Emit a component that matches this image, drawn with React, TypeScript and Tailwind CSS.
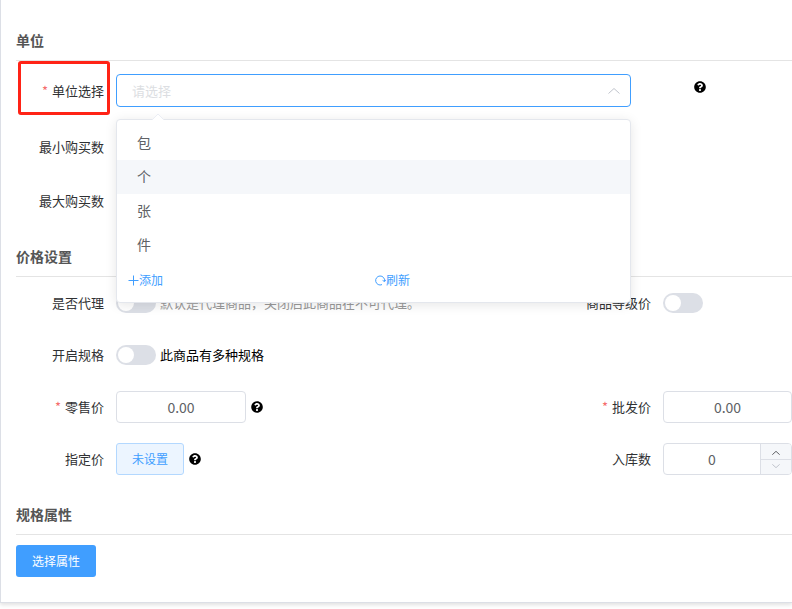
import React, { useState } from 'react';
import { FaQuestionCircle } from 'react-icons/fa';

interface FieldProps {
  id: string;
  label: string;
  required?: boolean;
  highlight?: boolean;
  children?: React.ReactNode;
}

const UNITS = ['包', '个', '张', '件'];

function Field({ id, label, required, highlight, children }: FieldProps) {
  return (
    <div className="flex min-h-8 min-w-0 items-center">
      <label
        htmlFor={id}
        className="relative w-[100px] shrink-0 pr-3 text-right text-[13px] leading-8 text-[#303133]"
      >
        {required && <span className="mr-1 text-[#f56c6c]">*</span>}
        {label}
        {highlight && (
          <span className="pointer-events-none absolute -top-3.5 right-1.5 -bottom-2 left-0.5 rounded-[3px] border-3 border-[#ff2316]" />
        )}
      </label>
      {children}
    </div>
  );
}

function SectionTitle({ children }: { children: React.ReactNode }) {
  return (
    <h2 className="border-b border-[#e4e4e4] pb-[9px] text-sm leading-[22px] font-bold text-[#555555]">
      {children}
    </h2>
  );
}

function Help() {
  return (
    <button type="button" aria-label="帮助" className="size-3 shrink-0 text-black">
      <FaQuestionCircle className="size-3" />
    </button>
  );
}

function Switch({ id }: { id: string }) {
  return (
    <input
      id={id}
      type="checkbox"
      role="switch"
      className="flex h-5 w-10 shrink-0 appearance-none items-center rounded-full bg-[#dcdfe6] px-0.5 before:size-4 before:rounded-full before:bg-white checked:justify-end checked:bg-[#409eff]"
    />
  );
}

function Chevron({ className, down }: { className?: string; down?: boolean }) {
  return (
    <svg viewBox="0 0 12 6" fill="none" stroke="currentColor" className={className} aria-hidden="true">
      <path d={down ? 'M.5.5 6 5.5 11.5.5' : 'M.5 5.5 6 .5 11.5 5.5'} vectorEffect="non-scaling-stroke" />
    </svg>
  );
}

function UnitSelect() {
  const [open, setOpen] = useState(true);
  const [value, setValue] = useState('');

  return (
    <div className="relative min-w-0 flex-1">
      <select
        id="unit"
        value={value}
        onMouseDown={(e) => {
          e.preventDefault();
          setOpen(!open);
        }}
        onChange={(e) => setValue(e.target.value)}
        className={`block h-[33px] w-full appearance-none rounded border border-[#409eff] bg-white px-[15px] text-[13px] outline-none ${
          value ? 'text-[#606266]' : 'text-[#dcdee2]'
        }`}
      >
        <option value="">请选择</option>
        {UNITS.map((unit) => (
          <option key={unit}>{unit}</option>
        ))}
      </select>
      <Chevron
        down={!open}
        className="pointer-events-none absolute top-[14px] right-[11px] h-1.5 w-3 text-[#c0c4cc]"
      />

      {open && (
        <div className="absolute top-full right-0 left-0 z-10 mt-3 rounded border border-[#e4e7ed] bg-white pt-1.5 shadow-[0_2px_12px_rgba(0,0,0,0.1)]">
          {/* Arrow */}
          <svg viewBox="0 0 12 6" className="absolute -top-1.5 left-[35px] h-1.5 w-3" aria-hidden="true">
            <path d="M0 6 6 0l6 6z" fill="#ffffff" />
            <path d="M0 6 6 0l6 6" fill="none" stroke="#ebeef5" />
          </svg>
          <ul>
            {UNITS.map((unit) => (
              <li key={unit}>
                <button
                  type="button"
                  onClick={() => {
                    setValue(unit);
                    setOpen(false);
                  }}
                  className={`block h-[34px] w-full px-5 pb-0.5 text-left text-sm leading-8 text-[#606266] ${
                    unit === '个' ? 'bg-[#f5f7fa]' : 'hover:bg-[#f5f7fa]'
                  }`}
                >
                  {unit}
                </button>
              </li>
            ))}
          </ul>
          <div className="grid h-10 grid-cols-[247fr_266fr] pb-1 text-xs text-[#409eff]">
            <button type="button" className="flex items-center pl-[11px]">
              <svg viewBox="0 0 11 11" stroke="currentColor" className="size-[11px]" aria-hidden="true">
                <path d="M5.5.5v10M.5 5.5h10" />
              </svg>
              添加
            </button>
            <button type="button" className="flex items-center pl-[11px]">
              <svg viewBox="0 0 11 11" fill="none" stroke="currentColor" className="size-[11px]" aria-hidden="true">
                <path d="M7 9.6A4.5 4.5 0 1 1 9.6 6.2M7.6 5.4l2 1.2 1.2-1.8" />
              </svg>
              刷新
            </button>
          </div>
        </div>
      )}
    </div>
  );
}

const inputClass =
  'h-8 min-w-0 rounded border border-[#dcdfe6] bg-white text-center text-sm text-[#606266] outline-none';

const gridClass = 'grid grid-cols-[minmax(0,1fr)_229px] gap-y-5 pt-2.5';

export default function App() {
  const [stock, setStock] = useState(0);

  return (
    <div className="overflow-hidden pb-1.5 font-['Noto_Sans_CJK_SC',sans-serif]">
      <form className="border-b border-l border-[#dcdfe6] bg-white pt-[29px] pb-[25px] pl-[15px] shadow-[0_2px_4px_rgba(0,0,0,0.12)]">
        <SectionTitle>单位</SectionTitle>
        <div className="flex flex-col gap-[22px] pt-[11px] pb-[28px]">
          <div className="flex h-[37px] items-center">
            <div className="min-w-0 flex-1">
              <Field id="unit" label="单位选择" required highlight>
                <UnitSelect />
              </Field>
            </div>
            <div className="flex w-[161px] shrink-0 pb-[7px] pl-[63px]">
              <Help />
            </div>
          </div>
          <Field id="min" label="最小购买数">
            <input id="min" type="text" className={`${inputClass} w-[130px]`} />
          </Field>
          <Field id="max" label="最大购买数">
            <input id="max" type="text" className={`${inputClass} w-[130px]`} />
          </Field>
        </div>

        <SectionTitle>价格设置</SectionTitle>
        <div className={`${gridClass} pb-[28px]`}>
          <Field id="agent" label="是否代理">
            <Switch id="agent" />
            <span className="pl-1 text-[13px] whitespace-nowrap text-[#999999]">
              默认是代理商品，关闭后此商品在不可代理。
            </span>
          </Field>
          <Field id="level" label="商品等级价">
            <Switch id="level" />
          </Field>

          <div className="col-span-2">
            <Field id="spec" label="开启规格">
              <Switch id="spec" />
              <span className="pl-1 text-[13px] text-black">此商品有多种规格</span>
            </Field>
          </div>

          <Field id="retail" label="零售价" required>
            <input id="retail" type="text" defaultValue="0.00" className={`${inputClass} mr-[5px] w-[130px]`} />
            <Help />
          </Field>
          <Field id="wholesale" label="批发价" required>
            <input id="wholesale" type="text" defaultValue="0.00" className={`${inputClass} w-full`} />
          </Field>

          <Field id="fixed" label="指定价">
            <button
              id="fixed"
              type="button"
              className="mr-[5px] h-8 w-[68px] rounded-[3px] border border-[#b3d8ff] bg-[#ecf5ff] text-xs text-[#409eff]"
            >
              未设置
            </button>
            <Help />
          </Field>
          <Field id="stock" label="入库数">
            <div className="flex h-8 min-w-0 flex-1 overflow-hidden rounded border border-[#dcdfe6]">
              <input
                id="stock"
                type="text"
                value={stock}
                onChange={(e) => setStock(Number(e.target.value) || 0)}
                className="min-w-0 flex-1 text-center text-sm text-[#606266] outline-none"
              />
              <div className="flex w-[31px] flex-col border-l border-[#dcdfe6] bg-[#f5f7fa]">
                <button
                  type="button"
                  aria-label="增加"
                  onClick={() => setStock(stock + 1)}
                  className="flex h-4 items-center justify-center border-b border-[#dcdfe6] pt-0.5 text-[#606266]"
                >
                  <Chevron className="h-1 w-2" />
                </button>
                <button
                  type="button"
                  aria-label="减少"
                  onClick={() => setStock(Math.max(0, stock - 1))}
                  className="flex flex-1 items-center justify-center pb-0.5 text-[#c0c4cc]"
                >
                  <Chevron down className="h-1 w-2" />
                </button>
              </div>
            </div>
          </Field>
        </div>

        <SectionTitle>规格属性</SectionTitle>
        <div className="pt-2.5">
          <button type="button" className="block h-8 w-20 rounded-[3px] bg-[#409eff] text-xs text-white">
            选择属性
          </button>
        </div>
      </form>
    </div>
  );
}
